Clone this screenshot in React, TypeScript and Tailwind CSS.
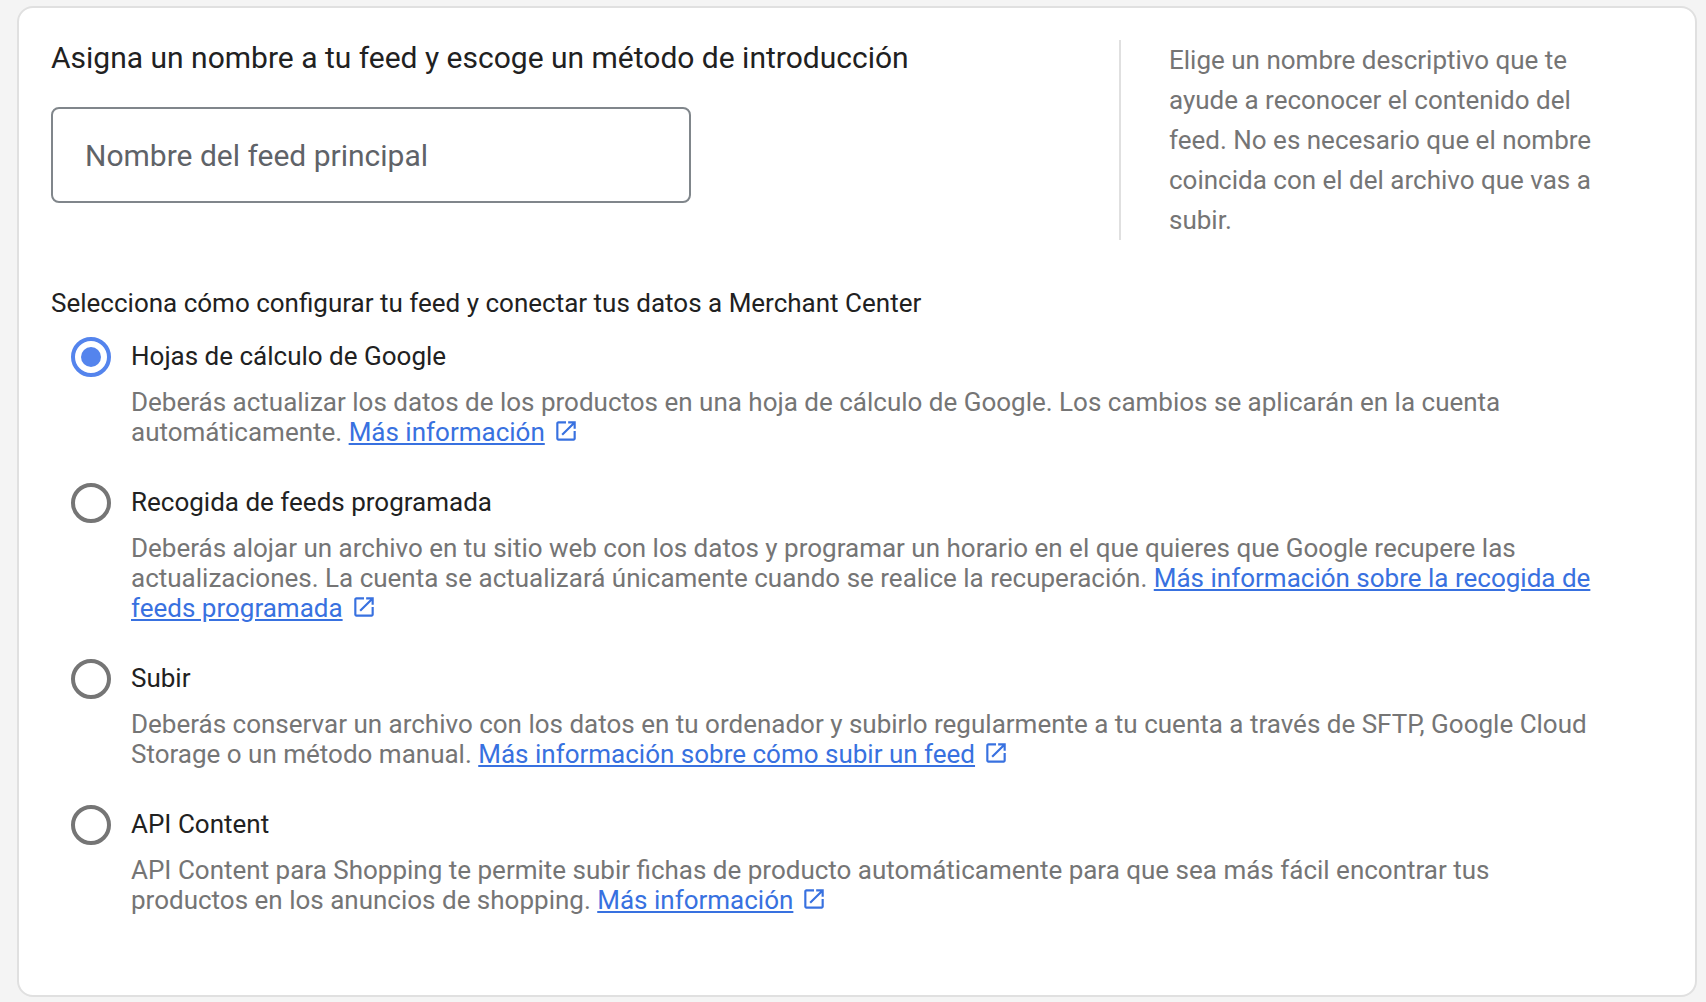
import { useState } from "react";

type FeedMethod = {
  id: string;
  title: string;
  description: string;
  linkText: string;
};

const METHODS: FeedMethod[] = [
  {
    id: "sheets",
    title: "Hojas de cálculo de Google",
    description:
      "Deberás actualizar los datos de los productos en una hoja de cálculo de Google. Los cambios se aplicarán en la cuenta automáticamente.",
    linkText: "Más información",
  },
  {
    id: "scheduled",
    title: "Recogida de feeds programada",
    description:
      "Deberás alojar un archivo en tu sitio web con los datos y programar un horario en el que quieres que Google recupere las actualizaciones. La cuenta se actualizará únicamente cuando se realice la recuperación.",
    linkText: "Más información sobre la recogida de feeds programada",
  },
  {
    id: "upload",
    title: "Subir",
    description:
      "Deberás conservar un archivo con los datos en tu ordenador y subirlo regularmente a tu cuenta a través de SFTP, Google Cloud Storage o un método manual.",
    linkText: "Más información sobre cómo subir un feed",
  },
  {
    id: "api",
    title: "API Content",
    description:
      "API Content para Shopping te permite subir fichas de producto automáticamente para que sea más fácil encontrar tus productos en los anuncios de shopping.",
    linkText: "Más información",
  },
];

function OpenInNew() {
  return (
    <svg viewBox="0 0 24 24" className="ml-2 inline-block size-[26px] align-[-3px]" fill="currentColor" aria-hidden="true">
      <path d="M19 19H5V5h7V3H5c-1.11 0-2 .9-2 2v14c0 1.1.89 2 2 2h14c1.1 0 2-.9 2-2v-7h-2v7zM14 3v2h3.59l-9.83 9.83 1.41 1.41L19 6.41V10h2V3h-7z" />
    </svg>
  );
}

export default function App() {
  const [method, setMethod] = useState("sheets");
  const [name, setName] = useState("");

  return (
    <main className="min-h-screen bg-[#f4f4f4] pt-[6px] pr-[9px] pb-[5px] pl-[17px] font-['Roboto',sans-serif] text-[#212121]">
      <section className="rounded-2xl border-2 border-[#e0e0e0] bg-white px-8 pt-8 pb-20">
        <div className="flex justify-between">
          <div className="w-[900px]">
            <h1 className="text-[30px] leading-9">
              <label htmlFor="feed-name">Asigna un nombre a tu feed y escoge un método de introducción</label>
            </h1>
            <input
              id="feed-name"
              type="text"
              value={name}
              onChange={(e) => setName(e.target.value)}
              placeholder="Nombre del feed principal"
              className="mt-[31px] h-24 w-[640px] rounded-lg border-2 border-[#80868b] px-8 text-[30px] placeholder:text-[#5f6368]"
            />
          </div>
          <p className="mr-14 w-[488px] border-l-2 border-[#e0e0e0] pl-12 text-[26px] leading-10 text-[#757575]">
            Elige un nombre descriptivo que te ayude a reconocer el contenido del feed. No es necesario que el nombre
            coincida con el del archivo que vas a subir.
          </p>
        </div>

        <fieldset className="mt-12">
          <legend className="text-[26px] leading-[30px]">
            Selecciona cómo configurar tu feed y conectar tus datos a Merchant Center
          </legend>
          <div className="mt-[19px] space-y-9 pl-5">
            {METHODS.map((m) => (
              <div key={m.id} className="flex gap-5">
                <input
                  id={m.id}
                  type="radio"
                  name="method"
                  checked={method === m.id}
                  onChange={() => setMethod(m.id)}
                  className="grid size-10 shrink-0 appearance-none place-items-center rounded-full border-4 border-[#757575] checked:border-[#5484ed] checked:before:size-5 checked:before:rounded-full checked:before:bg-[#5484ed]"
                />
                <div>
                  <label htmlFor={m.id} className="block text-[26px] leading-[38px]">
                    {m.title}
                  </label>
                  <p className="mt-3 mr-16 text-[26px] leading-[30px] text-[#757575]">
                    {m.description}{" "}
                    <a href="#" className="text-[#3871e0]">
                      <span className="underline">{m.linkText}</span>
                      <OpenInNew />
                    </a>
                  </p>
                </div>
              </div>
            ))}
          </div>
        </fieldset>
      </section>
    </main>
  );
}
